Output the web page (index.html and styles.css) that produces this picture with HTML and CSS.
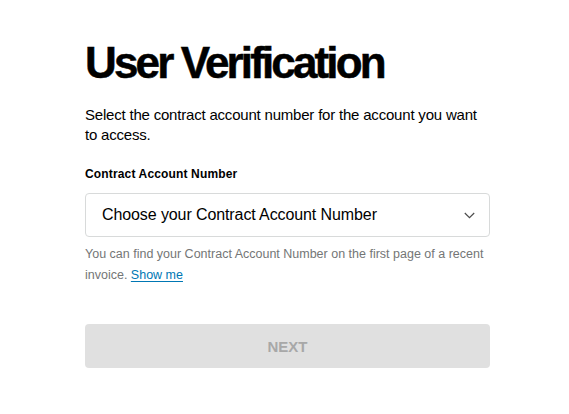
FILE: index.html
```html
<!DOCTYPE html>
<html lang="en">
<head>
<meta charset="utf-8">
<title>User Verification</title>
<link rel="stylesheet" href="styles.css">
</head>
<body>
<main class="page">
  <h1 class="title">User Verification</h1>
  <p class="intro">Select the contract account number for the account you want to access.</p>
  <label class="field-label" for="can">Contract Account Number</label>
  <div class="select" id="can">
    <span class="select-text">Choose your Contract Account Number</span>
    <svg class="chevron" width="11" height="7" viewBox="0 0 11 7" aria-hidden="true">
      <path d="M0.8 1 L5.5 5.6 L10.2 1" fill="none" stroke="#4b4b4b" stroke-width="1.2"/>
    </svg>
  </div>
  <p class="helper">You can find your Contract Account Number on the first page of a recent invoice. <a class="link" href="#">Show me</a></p>
  <button class="next" type="button" disabled>NEXT</button>
</main>
</body>
</html>
```

FILE: styles.css
```css
html, body {
  margin: 0;
  padding: 0;
  background: #ffffff;
}

body {
  font-family: "Liberation Sans", Arial, sans-serif;
  color: #000000;
}

.page {
  width: 405px;
  padding: 39px 0 0 85px;
  display: flex;
  flex-direction: column;
}

.title {
  margin: 0;
  font-size: 44px;
  line-height: 48px;
  font-weight: 700;
  letter-spacing: -2.85px;
  -webkit-text-stroke: 0.5px #000000;
}

.intro {
  margin: 18px 0 0;
  max-width: 392px;
  font-size: 15px;
  line-height: 20px;
  letter-spacing: -0.2px;
}

.field-label {
  margin-top: 21px;
  font-size: 12px;
  line-height: 16px;
  font-weight: 700;
  letter-spacing: 0.15px;
}

.select {
  margin-top: 11px;
  height: 42px;
  border: 1px solid #d8dada;
  border-radius: 4px;
  display: flex;
  align-items: center;
  justify-content: space-between;
  padding: 0 14px 0 16px;
}

.select-text {
  font-size: 16px;
  letter-spacing: -0.1px;
  color: #000000;
}

.chevron {
  display: block;
}

.helper {
  margin: 7px 0 0;
  font-size: 12.5px;
  line-height: 21px;
  color: #747676;
}

.link {
  color: #0077b4;
  text-decoration: underline;
  text-underline-offset: 2px;
}

.next {
  margin-top: 38px;
  height: 44px;
  border: none;
  border-radius: 4px;
  background: #e0e0e0;
  color: #a8a8a8;
  font-family: "Liberation Sans", Arial, sans-serif;
  font-size: 15px;
  font-weight: 700;
  padding: 0;
}
```
